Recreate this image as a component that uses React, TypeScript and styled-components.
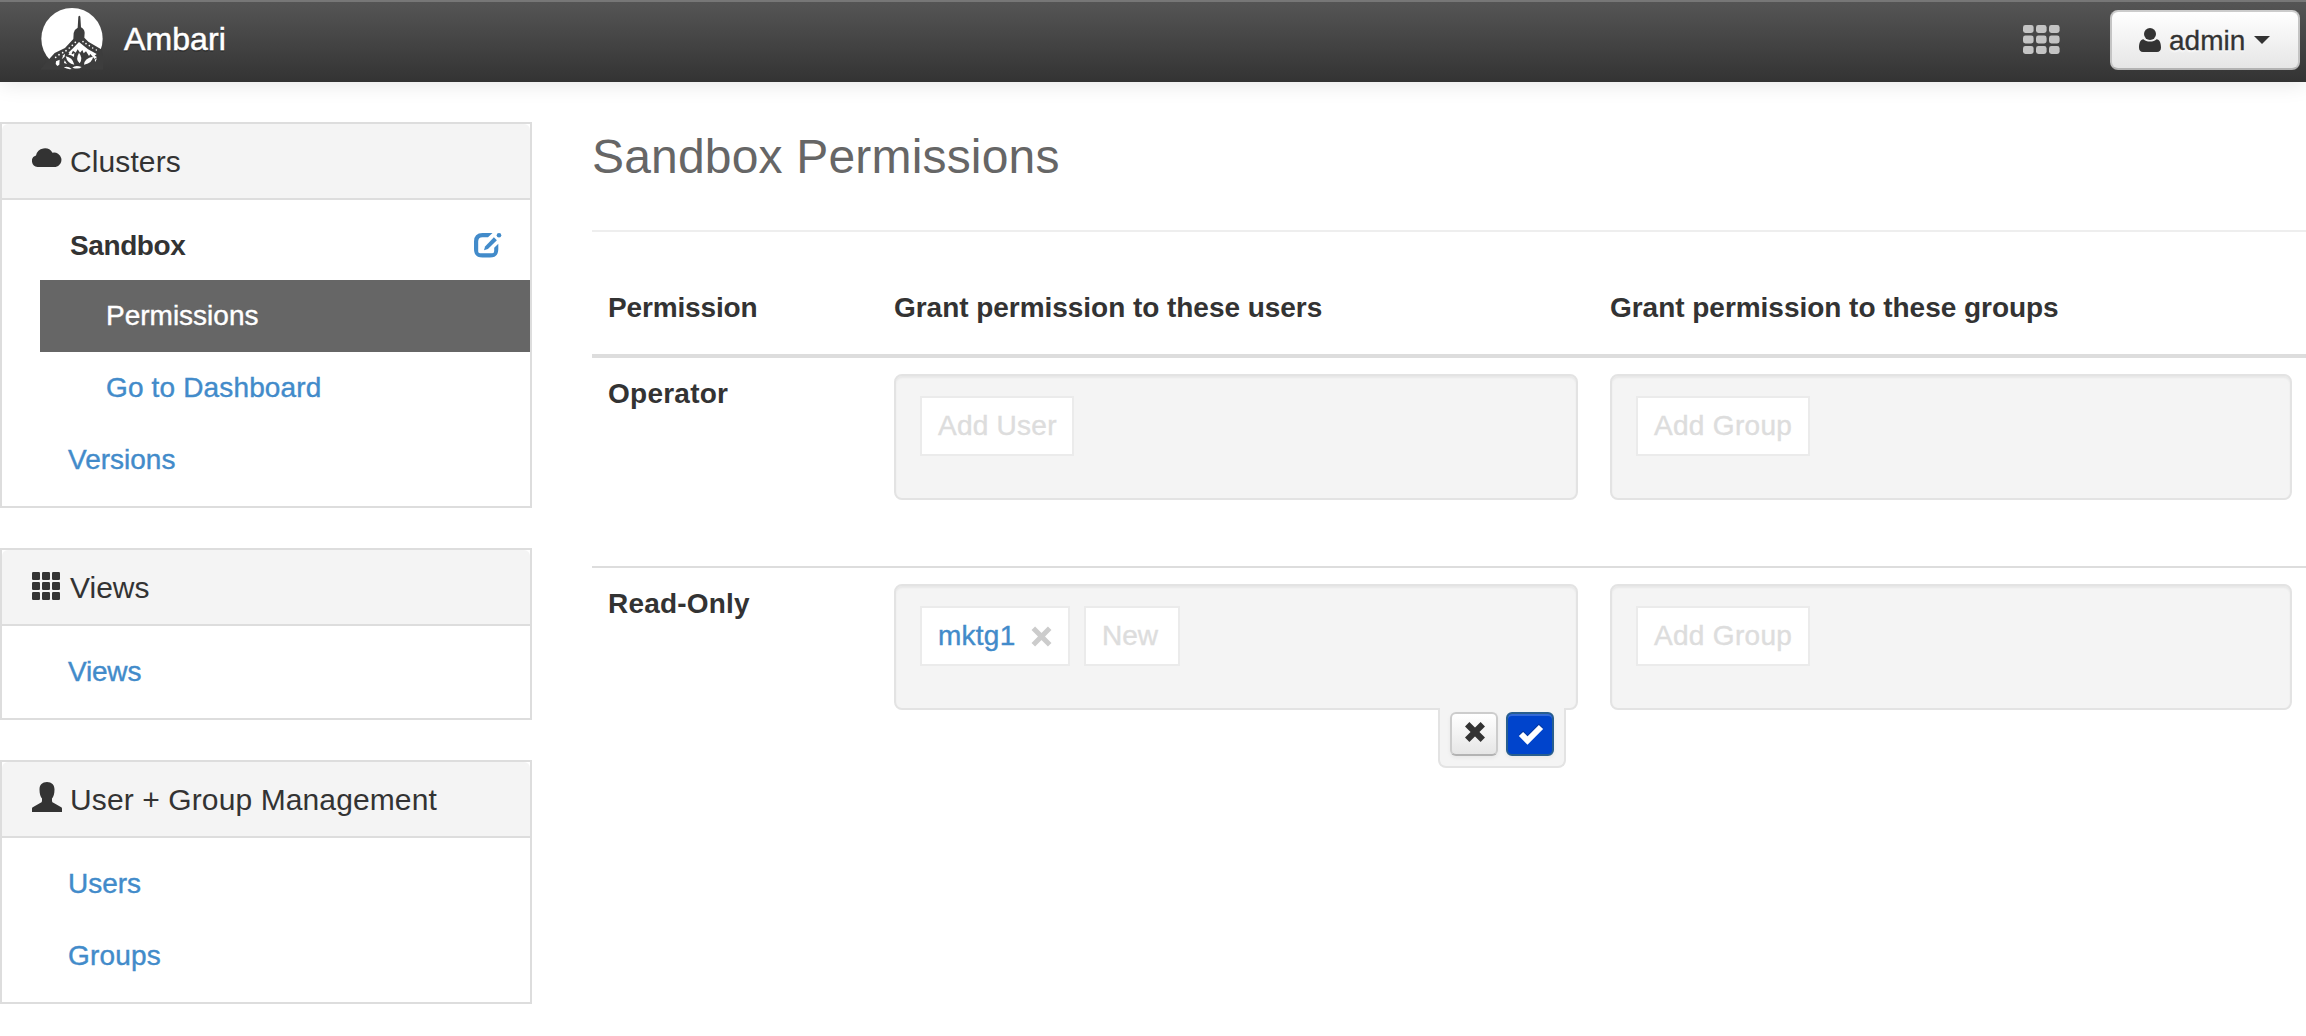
import React from "react";
import styled, { createGlobalStyle } from "styled-components";

const GlobalStyle = createGlobalStyle`
  *, *::before, *::after { box-sizing: border-box; }
  html, body { margin: 0; padding: 0; background: #fff; overflow: hidden; }
  body {
    font-family: "Liberation Sans", Arial, sans-serif;
    font-size: 28px;
    line-height: 40px;
    color: #333;
  }
  h1, h2 { margin: 0; font-weight: 400; }
  a { color: #428bca; text-decoration: none; }
  svg { display: block; flex: none; }
`;

const Page = styled.div`
  width: 2306px;
  height: 1036px;
  overflow: hidden;
`;

const Navbar = styled.header`
  display: flex;
  align-items: flex-start;
  height: 82px;
  padding: 0 6px 0 41px;
  border-top: 2px solid #777;
  background: linear-gradient(#555, #333);
  box-shadow: 0 2px 20px rgba(0, 0, 0, 0.1);
`;

const LogoSlot = styled.div`
  margin-top: 6px;
`;

const Brand = styled.span`
  margin: 17px auto 0 21px;
  font-size: 32px;
  line-height: 40px;
  letter-spacing: 0.1px;
  color: #fff;
  -webkit-text-stroke: 0.5px #fff;
  text-shadow: 0 2px 0 rgba(0, 0, 0, 0.25);
`;

const GridSlot = styled.div`
  margin: 23px 50px 0 0;
`;

const AdminButton = styled.button`
  display: flex;
  align-items: center;
  width: 190px;
  height: 60px;
  margin-top: 8px;
  padding: 0 0 0 27px;
  border: 2px solid;
  border-color: #ccc #c4c4c4 #b3b3b3;
  border-radius: 8px;
  background: linear-gradient(#fff, #e6e6e6);
  font: inherit;
  color: #333;
  text-shadow: 0 2px 2px rgba(255, 255, 255, 0.75);
`;

const AdminName = styled.span`
  margin: 1px 9px 0 8px;
  -webkit-text-stroke: 0.3px #333;
`;

const Columns = styled.div`
  display: flex;
  gap: 60px;
  padding-top: 40px;
`;

const Sidebar = styled.nav`
  display: flex;
  flex: none;
  flex-direction: column;
  gap: 40px;
  width: 532px;
`;

const Panel = styled.section`
  border: 2px solid #ddd;
`;

const PanelHeader = styled.div`
  display: flex;
  height: 76px;
  padding: 20px 0 0 30px;
  border-bottom: 2px solid #ddd;
  border-radius: 6px 6px 0 0;
  background: #f4f4f4;
`;

const HeaderIcon = styled.div<{ $top: number }>`
  width: 38px;
  padding-top: ${(p) => p.$top}px;
`;

const PanelTitle = styled.h2<{ $track?: number }>`
  padding-top: 1px;
  font-size: 30px;
  line-height: 34px;
  letter-spacing: ${(p) => p.$track ?? 0}px;
  white-space: nowrap;
`;

const PanelBody = styled.div`
  padding: 10px 0;
`;

const NavItem = styled.a<{ $track?: number; $nested?: boolean; $active?: boolean }>`
  display: block;
  height: 72px;
  margin-left: 38px;
  padding: 16px 0 16px ${(p) => (p.$nested ? 66 : 28)}px;
  letter-spacing: ${(p) => p.$track ?? 0}px;
  background: ${(p) => (p.$active ? "#666" : "transparent")};
  color: ${(p) => (p.$active ? "#fff" : "#428bca")};
  -webkit-text-stroke: 0.4px currentColor;
`;

const ClusterRow = styled.div`
  display: flex;
  justify-content: space-between;
  height: 70px;
  padding: 16px 28px 0 68px;
  font-weight: 700;
`;

const ClusterName = styled.span`
  letter-spacing: -0.4px;
`;

const EditSlot = styled.a`
  padding-top: 7px;
`;

const Main = styled.main`
  flex: none;
  width: 1716px;
`;

const Title = styled.h1`
  height: 110px;
  padding-top: 8px;
  border-bottom: 2px solid #eee;
  font-size: 48px;
  line-height: 54px;
  letter-spacing: 0.18px;
  color: #666;
`;

const Table = styled.div`
  display: flex;
  flex-direction: column;
`;

const TableRow = styled.div`
  display: grid;
  grid-template-columns: 286px 716px 714px;
  height: 210px;
  padding-top: 16px;
  border-bottom: 2px solid #ddd;

  &:last-child { border-bottom: 0; }
`;

const HeadRow = styled(TableRow)`
  height: 126px;
  padding-top: 56px;
  border-bottom: 4px solid #ddd;
`;

const Cell = styled.div`
  padding: 0 16px;
`;

const Label = styled.div<{ $track?: number }>`
  font-weight: 700;
  letter-spacing: ${(p) => p.$track ?? 0}px;
  white-space: nowrap;
`;

const Well = styled.div`
  position: relative;
  display: flex;
  align-items: flex-start;
  gap: 14px;
  height: 126px;
  padding: 20px 24px;
  border: 2px solid #e3e3e3;
  border-radius: 8px;
  background: #f4f4f4;
  box-shadow: inset 0 2px 2px rgba(0, 0, 0, 0.05);
`;

const Tag = styled.div<{ $width: number; $track?: number }>`
  display: flex;
  align-items: center;
  width: ${(p) => p.$width}px;
  height: 60px;
  padding: 0 0 0 16px;
  border: 2px solid #ebebeb;
  background: #fff;
  color: #ddd;
  letter-spacing: ${(p) => p.$track ?? 0}px;
  white-space: nowrap;
  -webkit-text-stroke: 0.4px currentColor;

  a { margin-right: 15px; }
`;

const Actions = styled.div`
  position: absolute;
  top: 122px;
  right: 10px;
  display: flex;
  gap: 8px;
  width: 128px;
  height: 60px;
  padding: 4px 10px 0;
  border: 2px solid #e3e3e3;
  border-top: 0;
  border-radius: 0 0 8px 8px;
  background: #f4f4f4;
`;

const ActionButton = styled.button<{ $primary?: boolean }>`
  display: flex;
  align-items: flex-start;
  justify-content: center;
  width: 48px;
  height: 44px;
  padding: ${(p) => (p.$primary ? "7px 0 0 2px" : "8px 0 0 1px")};
  border: 2px solid;
  border-color: ${(p) => (p.$primary ? "#285e8e" : "#ccc #ccc #b3b3b3")};
  border-radius: 6px;
  background: ${(p) =>
    p.$primary ? "#0044cc" : "linear-gradient(#fff, #e6e6e6)"};
  box-shadow: inset 0 2px 0 rgba(255, 255, 255, 0.2), 0 2px 4px rgba(0, 0, 0, 0.05);
`;

const AmbariLogo = () => (
  <svg width="62" height="62" viewBox="123 24 186 186">
    <circle cx="216" cy="116" r="92" fill="#fff" />
    <path
      fill="#3d3d3d"
      d="M235 50q3-5 6 0l2 32q10 5 11 16l-1 15 12 12 41 24 8 60H120l27-31 17-19 31-15 25-27 1-18q2-11 12-16z"
    />
    <g fill="#fff">
      <circle cx="226" cy="127" r="2.6" />
      <circle cx="217" cy="136" r="2.6" />
      <circle cx="208" cy="144" r="2.6" />
      <circle cx="198" cy="152" r="2.6" />
      <circle cx="188" cy="158" r="2.6" />
      <circle cx="177" cy="164" r="2.6" />
      <circle cx="167" cy="172" r="2.6" />
      <circle cx="249" cy="125" r="2.4" />
      <circle cx="258" cy="131" r="2.4" />
      <circle cx="268" cy="137" r="2.4" />
      <circle cx="278" cy="144" r="2.4" />
      <circle cx="289" cy="150" r="2.4" />
      <path d="M237 126l27 22 26 14-6 5 7 4-7 6-13-15-4 6-9-14-7 6-4-10-7 8-7-10-6 10-8-6-4 8-10-2 14-13z" />
      <path d="M211 155l6 8 6-4-1 12-9-5-8-2zM187 168l8-7-1 9-9 8 4-9z" />
      <path d="M237 158q13 16 2 32-14-11-2-32z" />
      <path d="M197 169q20 3 26 25-21-3-26-25z" />
      <path d="M279 170q0 17-27 24 1-20 27-24z" />
      <path d="M168 184l11-5-1 15-6 4-5-6z" />
      <path d="M191 202q12-6 24 5-13 2-24-5zM217 203q9-9 28-2-9 8-28 2zM194 181l7 11-9-3zM284 179l7-4-5 11z" />
    </g>
  </svg>
);

const Cells = ({ w, h, xs, ys, cw, ch, r, fill }: {
  w: number; h: number; xs: number[]; ys: number[]; cw: number; ch: number; r: number; fill: string;
}) => (
  <svg width={w} height={h} viewBox={`0 0 ${w} ${h}`} fill={fill}>
    {ys.map((y) => xs.map((x) => <rect key={`${x}-${y}`} x={x} y={y} width={cw} height={ch} rx={r} />))}
  </svg>
);

const AdminIcon = () => (
  <svg width="22" height="24" viewBox="0 0 22 24" fill="#333">
    <circle cx="11" cy="6" r="6" />
    <path d="M4.4 11.2C6 12.8 8.3 13.6 11 13.6s5-.8 6.6-2.4C20.6 11.4 22 15 22 19.5 22 22.4 20.5 24 18 24H4c-2.5 0-4-1.6-4-4.500 0-4.500 1.400-8.100 4.400-8.300z" />
  </svg>
);

const Caret = () => (
  <svg width="16" height="8" viewBox="0 0 16 8" fill="#333">
    <path d="M0 0h16L8 8z" />
  </svg>
);

const CloudIcon = () => (
  <svg width="31" height="20" viewBox="0 0 31 20" fill="#333">
    <path d="M6 20a5.900 5.900 0 0 1-2-11.500A9 9 0 0 1 20.500 5.700 7.300 7.300 0 1 1 23.700 20z" />
  </svg>
);

const PersonIcon = () => (
  <svg width="30" height="30" viewBox="0 0 30 30" fill="#333">
    <path d="M15 0c4.700 0 7.500 2.800 7.500 7.500 0 4.200-1 7.200-2.500 9.100v1.900c0 1.200.4 1.800 1.400 2.300L28.800 25c.9.500 1.200.9 1.200 1.800V30H0v-3.200c0-.9.3-1.300 1.200-1.800l7.400-4.200c1-.5 1.400-1.100 1.400-2.300v-1.900C8.500 14.700 7.500 11.700 7.500 7.500 7.500 2.800 10.300 0 15 0z" />
  </svg>
);

const EditIcon = () => (
  <svg width="28" height="25" viewBox="0 0 28 25" fill="#428bca">
    <path
      fillRule="evenodd"
      d="M8.500 0H18.500L14 4.200H8.500Q4.200 4.200 4.200 8.500V18.500Q4.200 20.300 6 20.300H18.300Q20.200 20.300 20.200 18V14.800L24.300 10.700V16Q24.300 24.600 16 24.600H8.500Q0 24.600 0 16V8.500Q0 0 8.500 0z"
    />
    <path d="M10 17.200L11.100 13.400 19.900 4.300 22.900 7.200 13.900 15.900z" />
    <circle cx="25" cy="2.300" r="2.300" />
  </svg>
);

const Cross = ({ size, color, thick }: { size: number; color: string; thick: number }) => (
  <svg width={size} height={size} viewBox="0 0 20 20">
    <path d="M2.200 2.200l15.600 15.600M17.800 2.200l-15.600 15.600" stroke={color} strokeWidth={thick} />
  </svg>
);

const Check = () => (
  <svg width="26" height="24" viewBox="0 0 26 24">
    <path d="M3 11.500l6.500 6.500L23 4.500" fill="none" stroke="#062a78" strokeWidth="6" opacity=".5" />
    <path d="M3 13l6.500 6.500L23 6" fill="none" stroke="#fff" strokeWidth="6" />
  </svg>
);

export default function App() {
  return (
    <>
      <GlobalStyle />
      <Page>
        <Navbar>
          <LogoSlot><AmbariLogo /></LogoSlot>
          <Brand>Ambari</Brand>
          <GridSlot>
            <Cells w={37} h={29} xs={[0, 13, 26]} ys={[0, 10.5, 21]} cw={10.6} ch={8} r={2.4} fill="#c4c4c4" />
          </GridSlot>
          <AdminButton>
            <AdminIcon />
            <AdminName>admin</AdminName>
            <Caret />
          </AdminButton>
        </Navbar>
        <Columns>
          <Sidebar>
            <Panel>
              <PanelHeader>
                <HeaderIcon $top={3}><CloudIcon /></HeaderIcon>
                <PanelTitle $track={0.1}>Clusters</PanelTitle>
              </PanelHeader>
              <PanelBody>
                <ClusterRow>
                  <ClusterName>Sandbox</ClusterName>
                  <EditSlot><EditIcon /></EditSlot>
                </ClusterRow>
                <NavItem $nested $active>Permissions</NavItem>
                <NavItem $nested $track={0.15}>Go to Dashboard</NavItem>
                <NavItem>Versions</NavItem>
              </PanelBody>
            </Panel>
            <Panel>
              <PanelHeader>
                <HeaderIcon $top={2}>
                  <Cells w={28} h={28} xs={[0, 10, 20]} ys={[0, 10, 20]} cw={8} ch={8} r={1.2} fill="#333" />
                </HeaderIcon>
                <PanelTitle>Views</PanelTitle>
              </PanelHeader>
              <PanelBody>
                <NavItem $track={-0.2}>Views</NavItem>
              </PanelBody>
            </Panel>
            <Panel>
              <PanelHeader>
                <HeaderIcon $top={0}><PersonIcon /></HeaderIcon>
                <PanelTitle $track={0.11}>User + Group Management</PanelTitle>
              </PanelHeader>
              <PanelBody>
                <NavItem>Users</NavItem>
                <NavItem $track={0.2}>Groups</NavItem>
              </PanelBody>
            </Panel>
          </Sidebar>
          <Main>
            <Title>Sandbox Permissions</Title>
            <Table>
              <HeadRow>
                <Cell><Label $track={-0.15}>Permission</Label></Cell>
                <Cell><Label $track={-0.04}>Grant permission to these users</Label></Cell>
                <Cell><Label $track={-0.03}>Grant permission to these groups</Label></Cell>
              </HeadRow>
              <TableRow>
                <Cell><Label $track={0.25}>Operator</Label></Cell>
                <Cell><Well><Tag $width={154} $track={0.25}>Add User</Tag></Well></Cell>
                <Cell><Well><Tag $width={174} $track={0.3}>Add Group</Tag></Well></Cell>
              </TableRow>
              <TableRow>
                <Cell><Label $track={0.2}>Read-Only</Label></Cell>
                <Cell>
                  <Well>
                    <Tag $width={150} $track={0.25}>
                      <a>mktg1</a>
                      <Cross size={21} color="#ccc" thick={4.8} />
                    </Tag>
                    <Tag $width={96}>New</Tag>
                    <Actions>
                      <ActionButton><Cross size={20} color="#333" thick={6.2} /></ActionButton>
                      <ActionButton $primary><Check /></ActionButton>
                    </Actions>
                  </Well>
                </Cell>
                <Cell><Well><Tag $width={174} $track={0.3}>Add Group</Tag></Well></Cell>
              </TableRow>
            </Table>
          </Main>
        </Columns>
      </Page>
    </>
  );
}
